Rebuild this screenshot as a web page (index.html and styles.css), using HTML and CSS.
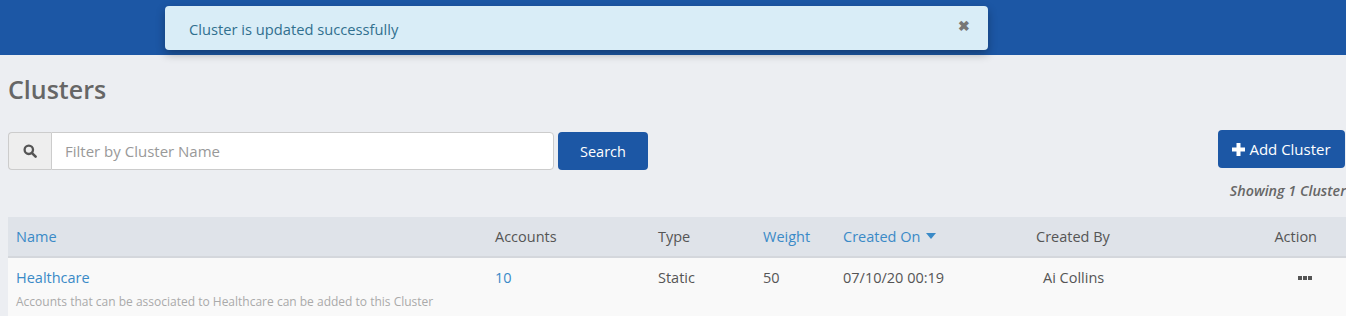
FILE: index.html
```html
<!DOCTYPE html>
<html>
<head>
<meta charset="utf-8">
<link rel="stylesheet" href="styles.css">
</head>
<body>
<header class="topbar"></header>
<div class="toast">
  <span class="toast-text">Cluster is updated successfully</span>
  <span class="toast-close">&#x2716;</span>
</div>
<main class="page">
  <h1 class="title">Clusters</h1>
  <div class="toolbar">
    <div class="search">
      <span class="search-addon">
        <svg width="14" height="14" viewBox="0 0 14 14"><circle cx="5.8" cy="5.8" r="4.2" fill="none" stroke="#555" stroke-width="2.3"/><line x1="8.8" y1="8.8" x2="12.6" y2="12.6" stroke="#555" stroke-width="2.6" stroke-linecap="round"/></svg>
      </span>
      <input class="search-input" type="text" placeholder="Filter by Cluster Name">
      <button class="btn btn-search">Search</button>
    </div>
    <div class="right-tools">
      <button class="btn btn-add"><svg width="13" height="13" viewBox="0 0 13 13"><rect x="4.5" y="0" width="4" height="13" fill="#fff"/><rect x="0" y="4.5" width="13" height="4" fill="#fff"/></svg>Add Cluster</button>
      <div class="count">Showing 1 Cluster</div>
    </div>
  </div>
  <table class="grid">
    <colgroup>
      <col class="c-name"><col class="c-acc"><col class="c-type"><col class="c-weight"><col class="c-created"><col class="c-by"><col class="c-action">
    </colgroup>
    <thead>
      <tr>
        <th class="link">Name</th>
        <th>Accounts</th>
        <th>Type</th>
        <th class="link">Weight</th>
        <th class="link">Created On <span class="caret"></span></th>
        <th>Created By</th>
        <th class="th-action">Action</th>
      </tr>
    </thead>
    <tbody>
      <tr>
        <td><a class="name-link">Healthcare</a><div class="desc">Accounts that can be associated to Healthcare can be added to this Cluster</div></td>
        <td class="num-link">10</td>
        <td>Static</td>
        <td>50</td>
        <td>07/10/20 00:19</td>
        <td class="by">Ai Collins</td>
        <td class="td-action"><span class="dots"><i></i><i></i><i></i></span></td>
      </tr>
    </tbody>
  </table>
</main>
</body>
</html>
```
FILE: styles.css
```css
* { box-sizing: border-box; }
html, body { margin: 0; padding: 0; }
body {
  background: #eceef2;
  font-family: "Open Sans", "Noto Sans", sans-serif;
  font-size: 14px;
  color: #555;
  width: 1346px;
  height: 316px;
  overflow: hidden;
  position: relative;
}
.topbar {
  height: 55px;
  background: #1c57a5;
}
.toast {
  position: absolute;
  left: 165px;
  top: 6px;
  width: 823px;
  height: 44px;
  background: #d9edf7;
  border-radius: 4px;
  box-shadow: 0 4px 10px rgba(0,0,0,0.3);
  display: flex;
  align-items: center;
  justify-content: space-between;
  padding: 0 18px 0 24px;
}
.toast-text { color: #31708f; font-size: 14.7px; margin-top: 2px; }
.toast-close { color: #777; font-size: 14px; font-weight: bold; margin-top: -6px; }
.page { padding: 0 0 0 8px; }
.title {
  margin: 0;
  padding-top: 17px;
  height: 77px;
  font-size: 25px;
  font-weight: 600;
  color: #666;
  line-height: 34px;
}
.toolbar {
  display: flex;
  justify-content: space-between;
  align-items: flex-start;
  height: 85px;
}
.search { display: flex; align-items: center; }
.search-addon {
  width: 43px;
  height: 38px;
  background: #eeeeee;
  border: 1px solid #ccc;
  border-right: none;
  border-radius: 4px 0 0 4px;
  display: flex;
  align-items: center;
  justify-content: center;
}
.search-input {
  width: 503px;
  height: 38px;
  border: 1px solid #ccc;
  border-radius: 0 4px 4px 0;
  padding: 0 13px;
  font-family: inherit;
  font-size: 15px;
  color: #555;
  background: #fff;
  outline: none;
}
.search-input::placeholder { color: #999; }
.btn {
  border: none;
  border-radius: 4px;
  background: #1c57a5;
  color: #fff;
  font-family: inherit;
  font-size: 14.5px;
  cursor: pointer;
}
.btn-search { margin-left: 4px; width: 90px; height: 38px; }
.right-tools { display: flex; flex-direction: column; align-items: flex-end; margin-top: -2px; }
.btn-add {
  width: 127px;
  height: 38px;
  margin-right: 1px;
  display: flex;
  align-items: center;
  justify-content: center;
  gap: 4px;
  font-size: 15px;
}
.count {
  margin-top: 13px;
  font-style: italic;
  font-weight: 600;
  font-size: 14.3px;
  color: #666;
}
.grid {
  width: 1339px;
  border-collapse: collapse;
  table-layout: fixed;
}
.c-name { width: 479px; }
.c-acc { width: 163px; }
.c-type { width: 105px; }
.c-weight { width: 80px; }
.c-created { width: 193px; }
.c-by { width: 200px; }
.grid thead tr { background: #dfe3e9; }
.grid th {
  height: 40px;
  text-align: left;
  font-weight: 500;
  font-size: 14.5px;
  color: #555;
  padding: 0 8px;
  border-bottom: 2px solid #d4d7dc;
}
.grid th.link { color: #3a8ac7; }
.caret {
  display: inline-block;
  width: 0; height: 0;
  border-left: 5px solid transparent;
  border-right: 5px solid transparent;
  border-top: 6px solid #3a8ac7;
  vertical-align: 3px;
  margin-left: 2px;
}
.th-action { text-align: right !important; padding-right: 30px !important; }
.grid tbody tr { background: #f9f9f9; }
.grid td {
  vertical-align: top;
  padding: 10px 8px 8px;
  font-size: 14.5px;
  color: #555;
  line-height: 20px;
}
.name-link { color: #3a8ac7; }
.num-link { color: #3a8ac7 !important; }
.desc { margin-top: 5px; font-size: 12px; color: #aaa; line-height: 18px; }
.by { padding-left: 15px !important; }
.td-action { text-align: right; padding-right: 35px !important; }
.dots { display: inline-flex; gap: 1px; margin-top: 8px; vertical-align: top; }
.dots i { width: 4px; height: 4px; background: #555; display: block; }
```
